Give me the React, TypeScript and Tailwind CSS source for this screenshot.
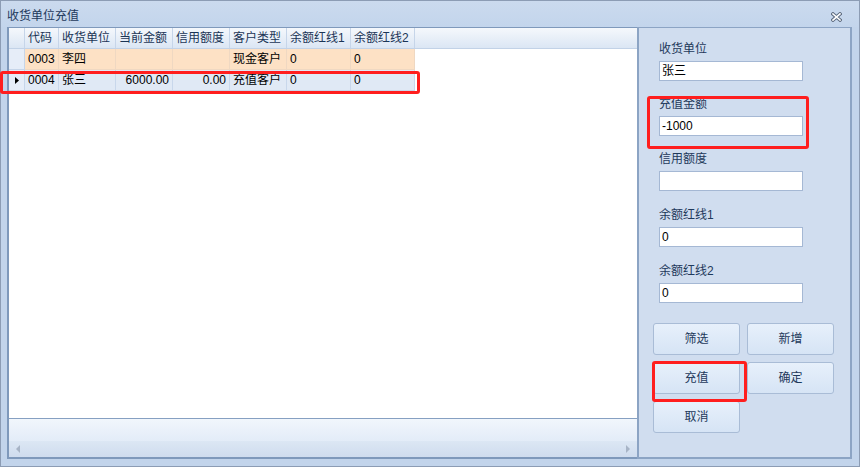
import React from "react";

type Col = { title: string; width: string; align: string };

const columns: Col[] = [
  { title: "代码", width: "w-[34px]", align: "text-left" },
  { title: "收货单位", width: "w-[57px]", align: "text-left" },
  { title: "当前金额", width: "w-[57px]", align: "text-right" },
  { title: "信用额度", width: "w-[57px]", align: "text-right" },
  { title: "客户类型", width: "w-[57px]", align: "text-left" },
  { title: "余额红线1", width: "w-[64px]", align: "text-left" },
  { title: "余额红线2", width: "w-[64px]", align: "text-left" },
];

const rows = [
  { cells: ["0003", "李四", "", "", "现金客户", "0", "0"], current: false },
  { cells: ["0004", "张三", "6000.00", "0.00", "充值客户", "0", "0"], current: true },
];

const fields = [
  { label: "收货单位", value: "张三", gap: "mt-0" },
  { label: "充值金额", value: "-1000", gap: "mt-[15px]" },
  { label: "信用额度", value: "", gap: "mt-[15px]" },
  { label: "余额红线1", value: "0", gap: "mt-[16px]" },
  { label: "余额红线2", value: "0", gap: "mt-[16px]" },
];

function Btn({ text }: { text: string }) {
  return (
    <button className="w-[87px] h-[32px] rounded-[3px] border border-[#a9bcd6] bg-linear-to-b from-[#e7f0fb] to-[#d6e4f5] text-[12px] text-[#1e395b]">
      {text}
    </button>
  );
}

function CloseIcon() {
  return (
    <svg width="11" height="10" viewBox="0 0 11 10">
      <path d="M2 2 L9 8 M9 2 L2 8" stroke="#5d6b80" strokeWidth="3.6" strokeLinecap="square" />
      <path d="M2 2 L9 8 M9 2 L2 8" stroke="#ffffff" strokeWidth="1.6" strokeLinecap="square" />
    </svg>
  );
}

export default function App() {
  return (
    <div className="relative w-[860px] h-[467px] bg-[#c2d4eb] border border-[#8c9cb4] flex flex-col font-['Liberation_Sans','Noto_Sans_CJK_SC',sans-serif] text-[12px]">
      {/* title bar */}
      <div className="h-[26px] flex items-start justify-between pl-[6px] pr-[17px] pt-[7px] bg-linear-to-b from-[#cbdaee] to-[#c3d5ec]">
        <span className="leading-[16px] text-[#1e395b]">收货单位充值</span>
        <span className="mt-[4px]">
          <CloseIcon />
        </span>
      </div>

      <div className="flex flex-1 pl-[6px] pr-[7px] pb-[7px]">
        {/* grid */}
        <div className="w-[630px] flex flex-col bg-white border-l-2 border-t border-b-2 border-[#7f99bb]">
          <div className="flex h-[21px] border-b border-[#c2d2e7] bg-linear-to-b from-[#f5f8fc] to-[#dbe6f4] text-[#1b3556]">
            <div className="w-[16px] border-r border-[#c6d5e9]" />
            {columns.map((c) => (
              <div key={c.title} className={`${c.width} px-[3px] leading-[20px] border-r border-[#c6d5e9] whitespace-nowrap`}>
                {c.title}
              </div>
            ))}
            <div className="flex-1" />
          </div>

          {rows.map((r) => (
            <div key={r.cells[0]} className="flex h-[21px]">
              <div className="w-[16px] flex items-center justify-center bg-[#e6edf8] border-r border-b border-[#c6d5e9]">
                {r.current && (
                  <svg width="4" height="7" viewBox="0 0 4 7">
                    <path d="M0 0 L4 3.5 L0 7 Z" fill="#000" />
                  </svg>
                )}
              </div>
              {columns.map((c, i) => (
                <div
                  key={c.title}
                  className={`${c.width} ${c.align} ${r.current ? "bg-[#e0e9f5] border-[#c8d7eb]" : "bg-[#fde1c5] border-[#efd8c2]"} px-[3px] leading-[20px] border-r border-b text-black whitespace-nowrap`}
                >
                  {r.cells[i]}
                </div>
              ))}
              <div className="flex-1" />
            </div>
          ))}

          <div className="flex-1" />

          <div className="h-[23px] border-t border-[#86a0c2] bg-linear-to-b from-[#f1f6fc] to-[#e3ecf8]" />
          <div className="h-[16px] flex items-center justify-between px-[7px] bg-linear-to-b from-[#dce7f4] to-[#cfdcee]">
            <svg width="4" height="8" viewBox="0 0 4 8">
              <path d="M4 0 L0 4 L4 8 Z" fill="#a7b4c6" />
            </svg>
            <svg width="4" height="8" viewBox="0 0 4 8">
              <path d="M0 0 L4 4 L0 8 Z" fill="#a7b4c6" />
            </svg>
          </div>
        </div>

        {/* side panel */}
        <div className="flex-1 bg-[#d0ddef] border-2 border-t border-[#8ca4c4] pl-[14px] pt-[13px]">
          <div className="pl-[6px] flex flex-col">
            {fields.map((f) => (
              <div key={f.label} className={`${f.gap} flex flex-col gap-[4px]`}>
                <span className="leading-[16px] text-[#1e395b]">{f.label}</span>
                <div className="w-[144px] h-[20px] border border-[#a5b8d4] bg-white pl-[2px] leading-[18px] text-black">
                  {f.value}
                </div>
              </div>
            ))}
          </div>
          <div className="mt-[20px] grid grid-cols-[87px_87px] gap-x-[7px] gap-y-[7px]">
            <Btn text="筛选" />
            <Btn text="新增" />
            <Btn text="充值" />
            <Btn text="确定" />
            <Btn text="取消" />
          </div>
        </div>
      </div>

      {/* red annotation boxes */}
      <div className="absolute left-[-1px] top-[70px] w-[420px] h-[23px] border-[3px] border-[#ff1e1e] rounded-[3px]" />
      <div className="absolute left-[646px] top-[95px] w-[162px] h-[53px] border-[3px] border-[#ff1e1e] rounded-[3px]" />
      <div className="absolute left-[651px] top-[360px] w-[95px] h-[41px] border-[3px] border-[#ff1e1e] rounded-[3px]" />
    </div>
  );
}
